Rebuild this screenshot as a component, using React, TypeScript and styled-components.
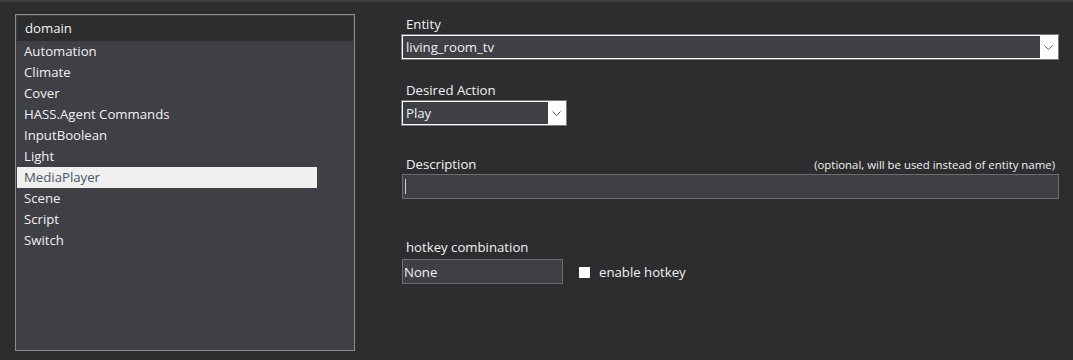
import React from "react";
import styled, { createGlobalStyle } from "styled-components";

const Global = createGlobalStyle`
  html, body { margin: 0; padding: 0; background: #2d2d30; }
  body { font-family: "Open Sans", "Noto Sans", sans-serif; color: #f1f1f1; }
  * { box-sizing: border-box; }
`;

const Page = styled.div`
  width: 1073px;
  height: 360px;
  background: #2d2d30;
  border-top: 2px solid #3c3c42;
  display: flex;
  align-items: flex-start;
  overflow: hidden;
`;

const ListBox = styled.div`
  margin: 12px 0 0 15px;
  width: 340px;
  height: 337px;
  border: 1px solid #8c8c92;
  background: #3f3f46;
  padding: 1px;
  display: flex;
  flex-direction: column;
`;

const ListHeader = styled.div`
  height: 25px;
  background: #2d2d30;
  padding-left: 8px;
  font-size: 13.2px;
  line-height: 25px;
  color: #f1f1f1;
`;

const ListItem = styled.div<{ $selected?: boolean }>`
  width: 300px;
  height: 21px;
  line-height: 21px;
  padding-left: 7px;
  font-size: 13.2px;
  white-space: nowrap;
  background: ${(p) => (p.$selected ? "#f0f0f0" : "transparent")};
  color: ${(p) => (p.$selected ? "#4a5568" : "#f1f1f1")};
`;

const Form = styled.div`
  margin-left: 46px;
  width: 658px;
  display: flex;
  flex-direction: column;
`;

const Group = styled.div<{ $top: number }>`
  margin-top: ${(p) => p.$top}px;
  display: flex;
  flex-direction: column;
`;

const LabelRow = styled.div`
  height: 18px;
  margin-bottom: 1px;
  padding: 0 4px 0 5px;
  display: flex;
  justify-content: space-between;
  align-items: flex-end;
`;

const Label = styled.span`
  font-size: 13.2px;
  line-height: 18px;
  color: #f1f1f1;
`;

const Hint = styled.span`
  font-size: 11.4px;
  line-height: 16px;
  color: #f1f1f1;
`;

const Combo = styled.div<{ $width: number }>`
  width: ${(p) => p.$width}px;
  height: 26px;
  border: 1px solid #7a7a7e;
  background: #ffffff;
  padding: 1px;
  display: flex;
`;

const ComboValue = styled.div`
  flex: 1;
  background: #3f3f46;
  padding-left: 3px;
  font-size: 13.2px;
  line-height: 22px;
  color: #f1f1f1;
`;

const ComboButton = styled.div`
  width: 17px;
  display: flex;
  align-items: center;
  justify-content: center;
`;

const TextBox = styled.div<{ $width: number }>`
  width: ${(p) => p.$width}px;
  height: 25px;
  margin-left: 1px;
  border: 1px solid #6c6c70;
  background: #3f3f46;
  padding-left: 1px;
  font-size: 13.2px;
  line-height: 22px;
  color: #f1f1f1;
  display: flex;
  align-items: center;
`;

const Caret = styled.div`
  width: 1px;
  height: 15px;
  margin-left: 1px;
  background: #d0d0d0;
`;

const HotkeyRow = styled.div`
  margin-top: 2px;
  display: flex;
  align-items: center;
  gap: 16px;
`;

const CheckLabel = styled.label`
  display: flex;
  align-items: center;
  gap: 8px;
  font-size: 13.2px;
  color: #f1f1f1;
  margin-top: 1px;
`;

const CheckBox = styled.span`
  width: 11px;
  height: 11px;
  margin-right: 1px;
  background: #ffffff;
  display: inline-block;
`;

const Chevron = () => (
  <svg width="9" height="5" viewBox="0 0 9 5">
    <path d="M0.5 0.5 L4.5 4.5 L8.5 0.5" fill="none" stroke="#555555" strokeWidth="1" />
  </svg>
);

const domains = [
  "Automation",
  "Climate",
  "Cover",
  "HASS.Agent Commands",
  "InputBoolean",
  "Light",
  "MediaPlayer",
  "Scene",
  "Script",
  "Switch",
];

export default function App() {
  return (
    <>
      <Global />
      <Page>
        <ListBox>
          <ListHeader>domain</ListHeader>
          {domains.map((d) => (
            <ListItem key={d} $selected={d === "MediaPlayer"}>
              {d}
            </ListItem>
          ))}
        </ListBox>
        <Form>
          <Group $top={13}>
            <LabelRow>
              <Label>Entity</Label>
            </LabelRow>
            <Combo $width={658}>
              <ComboValue>living_room_tv</ComboValue>
              <ComboButton>
                <Chevron />
              </ComboButton>
            </Combo>
          </Group>
          <Group $top={21}>
            <LabelRow>
              <Label>Desired Action</Label>
            </LabelRow>
            <Combo $width={166}>
              <ComboValue>Play</ComboValue>
              <ComboButton>
                <Chevron />
              </ComboButton>
            </Combo>
          </Group>
          <Group $top={29}>
            <LabelRow>
              <Label>Description</Label>
              <Hint>(optional, will be used instead of entity name)</Hint>
            </LabelRow>
            <TextBox $width={657}>
              <Caret />
            </TextBox>
          </Group>
          <Group $top={39}>
            <LabelRow>
              <Label>hotkey combination</Label>
            </LabelRow>
            <HotkeyRow>
              <TextBox $width={161}>None</TextBox>
              <CheckLabel>
                <CheckBox />
                enable hotkey
              </CheckLabel>
            </HotkeyRow>
          </Group>
        </Form>
      </Page>
    </>
  );
}
